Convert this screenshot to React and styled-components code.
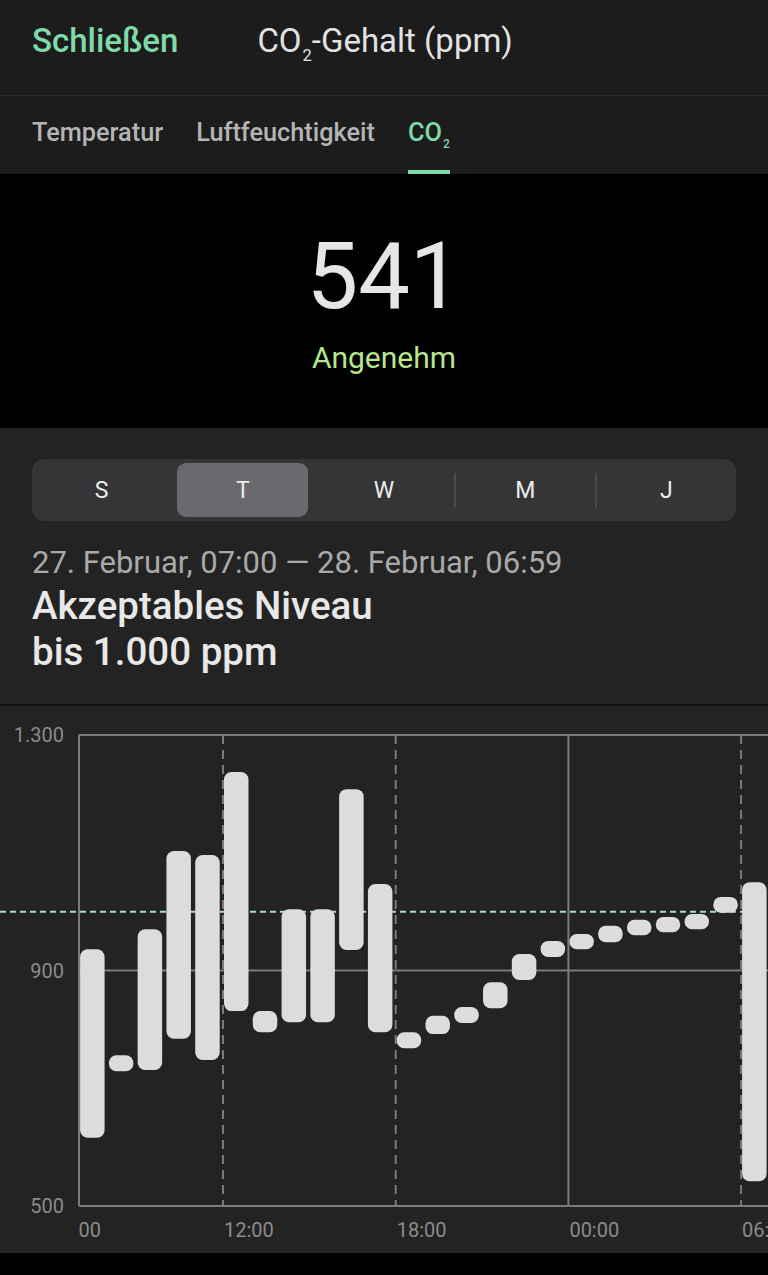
import React from "react";
import styled, { createGlobalStyle } from "styled-components";

const Global = createGlobalStyle`
  html, body { margin: 0; padding: 0; background: #000; }
  body { font-family: Roboto, "Noto Sans", sans-serif; -webkit-font-smoothing: antialiased; }
  * { box-sizing: border-box; }
`;

const Page = styled.div`
  width: 768px;
  min-height: 1275px;
  background: #000;
  display: flex;
  flex-direction: column;
`;

const Header = styled.header`
  height: 96px;
  background: #1c1c1c;
  border-bottom: 1px solid #2c2c2c;
  display: flex;
  align-items: center;
  padding: 0 32px 14px;
  gap: 79px;
`;

const CloseButton = styled.button`
  background: none;
  border: 0;
  padding: 0;
  font-family: Roboto, sans-serif;
  font-size: 33px;
  font-weight: 500;
  color: #7fd9a8;
  line-height: 1;
`;

const Title = styled.h1`
  margin: 0;
  font-size: 33px;
  font-weight: 400;
  color: #e2e2e2;
  line-height: 1;
`;

const Sub = styled.sub`
  font-size: ${(p) => p.$size || "0.5em"};
  vertical-align: -0.55em;
  line-height: 0;
  margin-left: 1px;
`;

const Tabs = styled.nav`
  height: 78px;
  background: #1c1c1c;
  display: flex;
  gap: 33px;
  padding: 0 32px;
`;

const Tab = styled.div`
  height: 100%;
  display: flex;
  align-items: center;
  font-size: 25.3px;
  font-weight: 500;
  color: ${(p) => (p.$active ? "#7fd9a8" : "#b4b4b4")};
  border-bottom: 4px solid ${(p) => (p.$active ? "#7fd9a8" : "transparent")};
`;

const TabLabel = styled.span`
  display: inline-block;
  line-height: 1;
`;

const Hero = styled.section`
  height: 254px;
  background: #000;
  display: flex;
  flex-direction: column;
  align-items: center;
  padding-top: 57px;
`;

const BigValue = styled.div`
  font-size: 92px;
  font-weight: 400;
  color: #e6e6e6;
  line-height: 1;
`;

const Status = styled.div`
  margin-top: 20px;
  font-size: 30px;
  color: #b6e68d;
  line-height: 1;
`;

const RangeSection = styled.section`
  background: #232323;
  padding: 31px 32px 0;
  height: 278px;
  border-bottom: 2px solid #111;
`;

const Segmented = styled.div`
  height: 62px;
  background: #353537;
  border-radius: 12px;
  padding: 4px;
  display: grid;
  grid-template-columns: repeat(5, 1fr);
  column-gap: 10px;
`;

const Segment = styled.div`
  position: relative;
  display: flex;
  align-items: center;
  justify-content: center;
  font-size: 23px;
  color: #ececec;
  border-radius: 9px;
  background: ${(p) => (p.$active ? "#6a6a6e" : "transparent")};
  ${(p) =>
    p.$divider
      ? `&::before { content: ""; position: absolute; left: -6px; top: 10px; bottom: 10px; width: 2px; background: #4b4b4e; }`
      : ""}
`;

const DateRange = styled.div`
  margin-top: 24px;
  font-size: 31px;
  color: #a9a9a9;
  line-height: 36px;
`;

const Level = styled.div`
  margin-top: 2px;
  font-size: 38.5px;
  font-weight: 500;
  color: #e8e8e8;
  line-height: 46px;
`;

const ChartSection = styled.section`
  background: #232323;
  height: 547px;
`;

const ChartSvg = styled.svg`
  display: block;
  font-family: Roboto, sans-serif;
`;

const bars = [
  [936, 616], [756, 729], [970, 731], [1103, 784], [1096, 748], [1237, 831],
  [831, 795], [1004, 812], [1004, 812], [1208, 935], [1047, 795], [795, 768],
  [823, 792], [838, 811], [880, 836], [928, 884], [950, 923], [962, 936],
  [976, 948], [986, 960], [991, 965], [996, 970], [1025, 998], [1050, 542],
];

const TOP = 29;
const SCALE = 0.58875;
const yOf = (v) => TOP + (1300 - v) * SCALE;
const LINE0 = 50.3;
const SIX = 172.7;
const HOUR = SIX / 6;
const PLOT_L = 79;

function Chart() {
  const grid = "#7b7b7b";
  const labels = ["06:00", "12:00", "18:00", "00:00", "06:00"];
  return (
    <ChartSvg width="768" height="547" viewBox="0 0 768 547">
      <defs>
        <clipPath id="plot">
          <rect x={PLOT_L} y="0" width={768 - PLOT_L} height="547" />
        </clipPath>
      </defs>
      {[1300, 900, 500].map((v) => (
        <g key={v}>
          <line x1={PLOT_L} x2="768" y1={yOf(v)} y2={yOf(v)} stroke={grid} strokeWidth="2" />
          <text x="64" y={yOf(v) + 7} textAnchor="end" fontSize="20" fill="#8b8b8b">
            {v === 1300 ? "1.300" : v}
          </text>
        </g>
      ))}
      <line x1={PLOT_L} x2={PLOT_L} y1={yOf(1300)} y2={yOf(500)} stroke={grid} strokeWidth="2" />
      <g clipPath="url(#plot)">
        {labels.map((l, k) => {
          const x = LINE0 + SIX * k;
          return (
            <g key={k}>
              <line
                x1={x}
                x2={x}
                y1={yOf(1300)}
                y2={yOf(500)}
                stroke={grid}
                strokeWidth="2"
                strokeDasharray={k === 3 ? "none" : "9 6"}
              />
              <text x={x + 1} y={531} fontSize="20" fill="#8b8b8b">
                {l}
              </text>
            </g>
          );
        })}
      </g>
      <line
        x1="0"
        x2="768"
        y1={yOf(1000)}
        y2={yOf(1000)}
        stroke="#a9dcc4"
        strokeWidth="2"
        strokeDasharray="6 4"
      />
      {bars.map(([hi, lo], i) => {
        const y1 = yOf(hi);
        const y2 = yOf(lo);
        return (
          <rect
            key={i}
            x={LINE0 + HOUR * (i + 1) + 1}
            y={y1}
            width="24.5"
            height={y2 - y1}
            rx="7.5"
            fill="#dcdcdc"
          />
        );
      })}
    </ChartSvg>
  );
}

export default function App() {
  const periods = ["S", "T", "W", "M", "J"];
  return (
    <Page>
      <Global />
      <Header>
        <CloseButton>Schließen</CloseButton>
        <Title>
          CO<Sub>2</Sub>-Gehalt (ppm)
        </Title>
      </Header>
      <Tabs>
        <Tab>
          <TabLabel>Temperatur</TabLabel>
        </Tab>
        <Tab>
          <TabLabel>Luftfeuchtigkeit</TabLabel>
        </Tab>
        <Tab $active>
          <TabLabel>
            CO<Sub $size="12px">2</Sub>
          </TabLabel>
        </Tab>
      </Tabs>
      <Hero>
        <BigValue>541</BigValue>
        <Status>Angenehm</Status>
      </Hero>
      <RangeSection>
        <Segmented>
          {periods.map((p, i) => (
            <Segment key={p} $active={i === 1} $divider={i >= 3}>
              {p}
            </Segment>
          ))}
        </Segmented>
        <DateRange>27. Februar, 07:00 — 28. Februar, 06:59</DateRange>
        <Level>
          Akzeptables Niveau
          <br />
          bis 1.000 ppm
        </Level>
      </RangeSection>
      <ChartSection>
        <Chart />
      </ChartSection>
    </Page>
  );
}
